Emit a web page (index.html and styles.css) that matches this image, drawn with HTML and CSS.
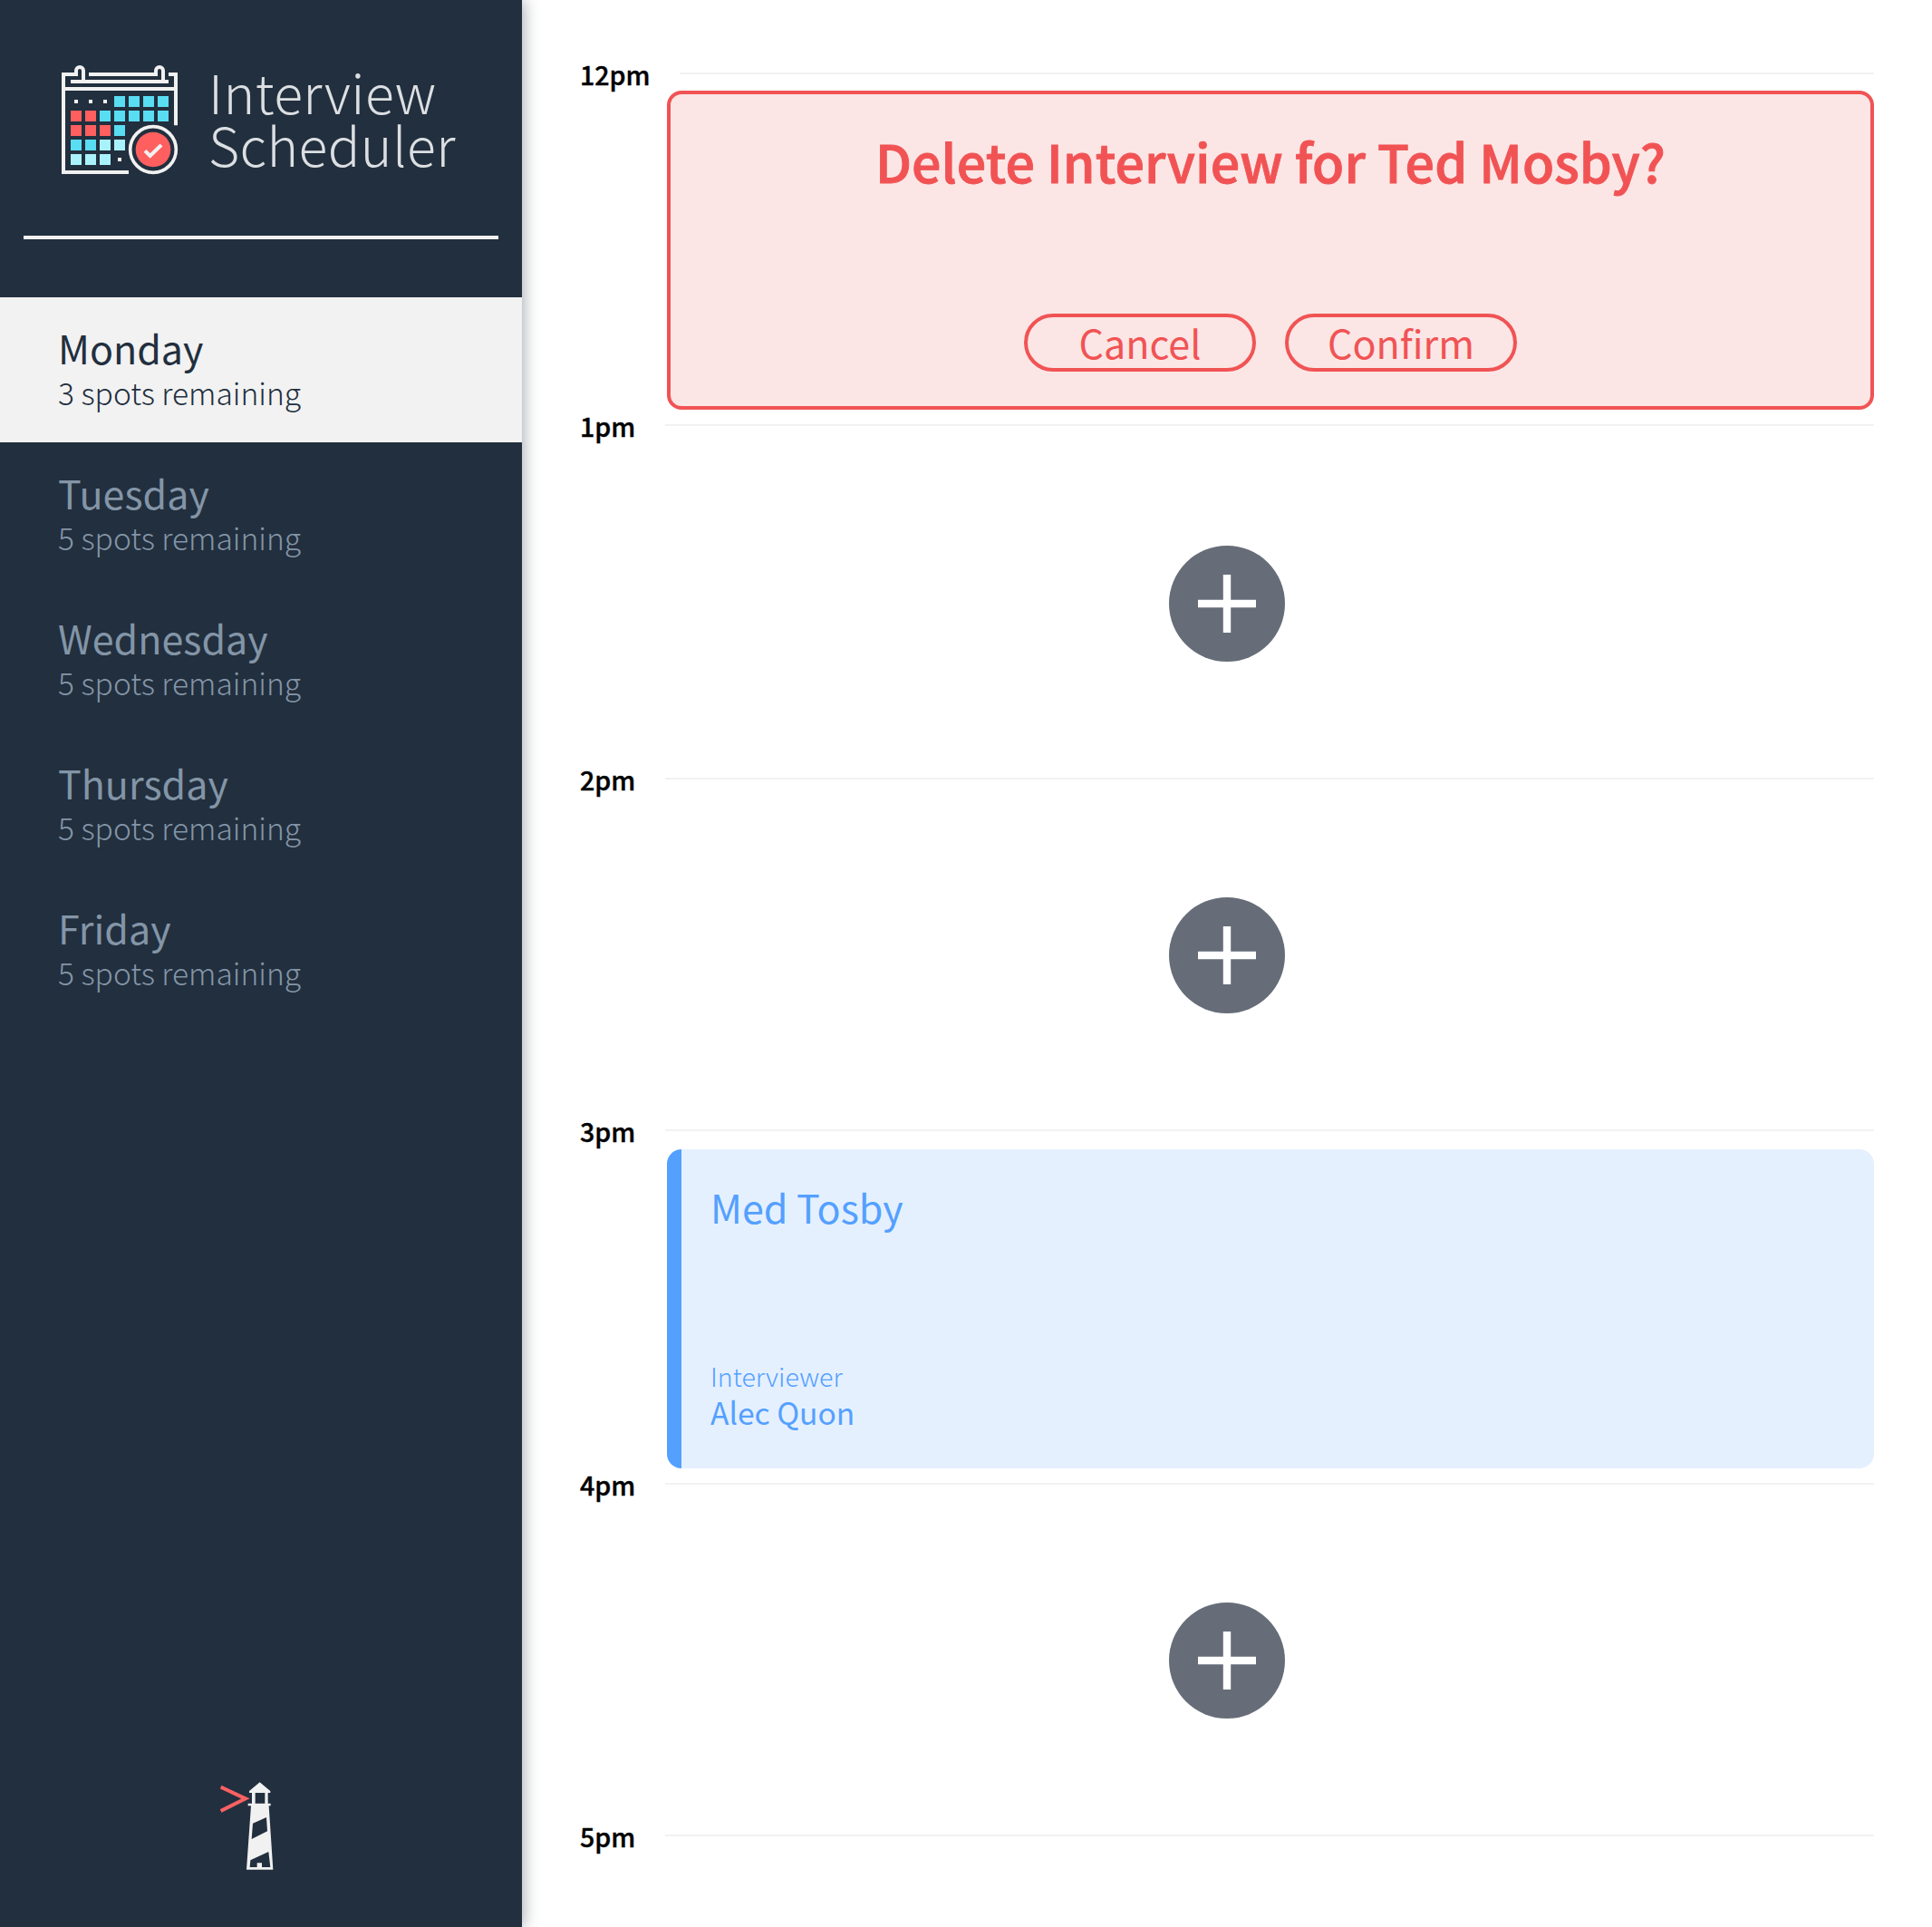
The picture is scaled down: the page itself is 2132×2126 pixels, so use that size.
FILE: index.html
```html
<!DOCTYPE html>
<html lang="en">
<head>
<meta charset="utf-8">
<title>Interview Scheduler</title>
<link rel="stylesheet" href="styles.css">
</head>
<body>
<main class="layout">
  <section class="sidebar">
    <div class="brand">
      <svg class="brand__icon" viewBox="84 60 390 372">
        <g fill="none" stroke="#f1f1f1" stroke-width="12">
          <path d="M306 420H90V96H132V84a12 12 0 0 1 24 0V114"/>
          <path d="M174 96H396V84a12 12 0 0 1 24 0V114M438 96H462V265M114 120H438M90 144H462"/>
          <circle cx="387" cy="345" r="76" stroke-width="11"/>
        </g>
        <path fill="#f1f1f1" d="M126 180h12v12h-12zM174 180h12v12h-12zM222 180h12v12h-12zM270 372h12v12h-12z"/>
        <path fill="#59ddf3" d="M258 168h36v36h-36zM306 168h36v36h-36zM354 168h36v36h-36zM402 168h36v36h-36zM210 216h36v36h-36zM258 216h36v36h-36zM306 216h36v36h-36zM354 216h36v36h-36zM402 216h36v36h-36zM258 264h36v36h-36zM114 312h36v36h-36zM162 312h36v36h-36z"/>
        <path fill="#aaf2fb" d="M210 312h36v36h-36zM258 312h36v36h-36zM114 360h36v36h-36zM162 360h36v36h-36zM210 360h36v36h-36z"/>
        <path fill="#ff5f5e" d="M114 216h36v36h-36zM162 216h36v36h-36zM114 264h36v36h-36zM162 264h36v36h-36zM210 264h36v36h-36z"/>
        <circle cx="387" cy="345" r="58" fill="#ff5f5e"/>
        <path d="M360 349L377 366L414 330" fill="none" stroke="#f1f1f1" stroke-width="12"/>
      </svg>
      <div class="brand__name"><span>Interview</span><span>Scheduler</span></div>
    </div>
    <hr class="separator">
    <nav class="days">
      <div class="day day--selected"><h2 class="day__name">Monday</h2><h3 class="day__spots">3 spots remaining</h3></div>
      <div class="day"><h2 class="day__name">Tuesday</h2><h3 class="day__spots">5 spots remaining</h3></div>
      <div class="day"><h2 class="day__name">Wednesday</h2><h3 class="day__spots">5 spots remaining</h3></div>
      <div class="day"><h2 class="day__name">Thursday</h2><h3 class="day__spots">5 spots remaining</h3></div>
      <div class="day"><h2 class="day__name">Friday</h2><h3 class="day__spots">5 spots remaining</h3></div>
    </nav>
    <svg class="lighthouse" viewBox="70 76 180 291">
      <path d="M72 93L154 131L72 172" fill="none" stroke="#fa6163" stroke-width="12"/>
      <path fill="#f1f1f1" fill-rule="evenodd" d="M201 77L236 106V112H228V147H237V155H231L245 366H157L172 155H162V147H175V112H166V106ZM186 112V147H218V112ZM223 193L178 213L174 265L226 239ZM230 307L170 335L168 358H192V344H208V358H236Z"/>
    </svg>
  </section>
  <section class="schedule">
    <article class="slot">
      <header class="hour"><h4 class="hour__label">12pm</h4><hr class="hour__line"></header>
      <div class="card card--confirm">
        <h1 class="card__title">Delete Interview for Ted Mosby?</h1>
        <div class="card__actions"><button class="button">Cancel</button><button class="button">Confirm</button></div>
      </div>
    </article>
    <article class="slot slot--tall">
      <header class="hour"><h4 class="hour__label">1pm</h4><hr class="hour__line"></header>
      <div class="add"><svg class="add__icon" viewBox="0 0 128 128"><circle cx="64" cy="64" r="64" fill="#666d78"/><path d="M64 32V96M32 64H96" stroke="#fff" stroke-width="8.4"/></svg></div>
    </article>
    <article class="slot">
      <header class="hour"><h4 class="hour__label">2pm</h4><hr class="hour__line"></header>
      <div class="add"><svg class="add__icon" viewBox="0 0 128 128"><circle cx="64" cy="64" r="64" fill="#666d78"/><path d="M64 32V96M32 64H96" stroke="#fff" stroke-width="8.4"/></svg></div>
    </article>
    <article class="slot slot--tall">
      <header class="hour"><h4 class="hour__label">3pm</h4><hr class="hour__line"></header>
      <div class="card card--show">
        <h2 class="card__student">Med Tosby</h2>
        <div class="card__interviewer"><h4 class="card__caption">Interviewer</h4><h3 class="card__person">Alec Quon</h3></div>
      </div>
    </article>
    <article class="slot">
      <header class="hour"><h4 class="hour__label">4pm</h4><hr class="hour__line"></header>
      <div class="add"><svg class="add__icon" viewBox="0 0 128 128"><circle cx="64" cy="64" r="64" fill="#666d78"/><path d="M64 32V96M32 64H96" stroke="#fff" stroke-width="8.4"/></svg></div>
    </article>
    <article class="slot slot--last">
      <header class="hour"><h4 class="hour__label">5pm</h4><hr class="hour__line"></header>
    </article>
  </section>
</main>
</body>
</html>
```
FILE: styles.css
```css
* { box-sizing: border-box; }
body, h1, h2, h3, h4, hr { margin: 0; }
body { background: #fff; font-family: "Noto Sans CJK SC", "Noto Sans", sans-serif; }
h1, h2, h3, h4 { font-weight: 400; white-space: nowrap; }
.layout { display: flex; height: 2126px; overflow: hidden; }

.sidebar {
  display: flex; flex-direction: column; flex: none;
  width: 576px; background: #222f3e;
  box-shadow: 2px 0 16px rgba(34, 47, 62, 0.4);
}
.brand { display: flex; height: 260px; padding: 70px 0 0 68px; gap: 32px; }
.brand__icon { width: 130px; height: 124px; flex: none; }
.brand__name { display: flex; flex-direction: column; color: #dcdfe2; font-size: 59px; font-weight: 300; letter-spacing: 0.4px; line-height: 58px; padding-top: 2px; }
.separator { border: 0; height: 4px; background: #f1f1f1; margin: 0 26px; flex: none; }
.days { margin-top: 64px; }
.day { height: 160px; padding: 32px 64px 28px; color: #8395a7; }
.day--selected { background: #f2f2f2; color: #222f3e; }
.day__name { font-size: 43px; line-height: 46px; }
.day__spots { font-size: 33.6px; line-height: 54px; font-weight: 300; }
.lighthouse { width: 60px; height: 97px; margin: auto 0 63px 243px; }

.schedule { flex: 1; padding: 64px 64px 0; }
.slot { height: 388px; }
.slot--tall { height: 390px; }
.hour { display: flex; align-items: center; height: 34px; gap: 32px; }
.hour__label { font-size: 28.6px; font-weight: 500; line-height: 32px; padding-top: 2px; min-width: 62px; color: #000; -webkit-text-stroke: 0.4px; }
.hour__line { flex: 1; border: 0; height: 2px; background: #f2f2f2; }
.card { margin: 2px 0 0 96px; height: 352px; border-radius: 16px; display: flex; flex-direction: column; justify-content: space-between; }
.card--confirm { border: 4px solid #f15354; background: #fbe6e5; color: #f15354; align-items: center; padding: 40px 0 38px; }
.card__title { font-size: 57.3px; font-weight: 500; line-height: 68px; letter-spacing: 0.1px; -webkit-text-stroke: 0.9px; }
.card__actions { display: flex; gap: 32px; }
.button { width: 256px; height: 64px; padding: 0 0 2px; border: 4px solid #f15354; border-radius: 32px; background: transparent; color: #f15354; font-family: inherit; font-size: 43px; line-height: 54px; }
.card--show { margin-top: 4px; border-left: 16px solid #54a0ff; background: #e5f0ff; color: #54a0ff; padding: 36px 32px 40px; }
.card__student { font-size: 43px; line-height: 54px; }
.card__caption { font-size: 28.6px; line-height: 36px; font-weight: 300; }
.card__person { font-size: 33.6px; line-height: 44px; }
.add { display: flex; justify-content: center; margin-top: 114px; }
.slot--tall .add { margin-top: 116px; }
.add__icon { width: 128px; height: 128px; }
```
